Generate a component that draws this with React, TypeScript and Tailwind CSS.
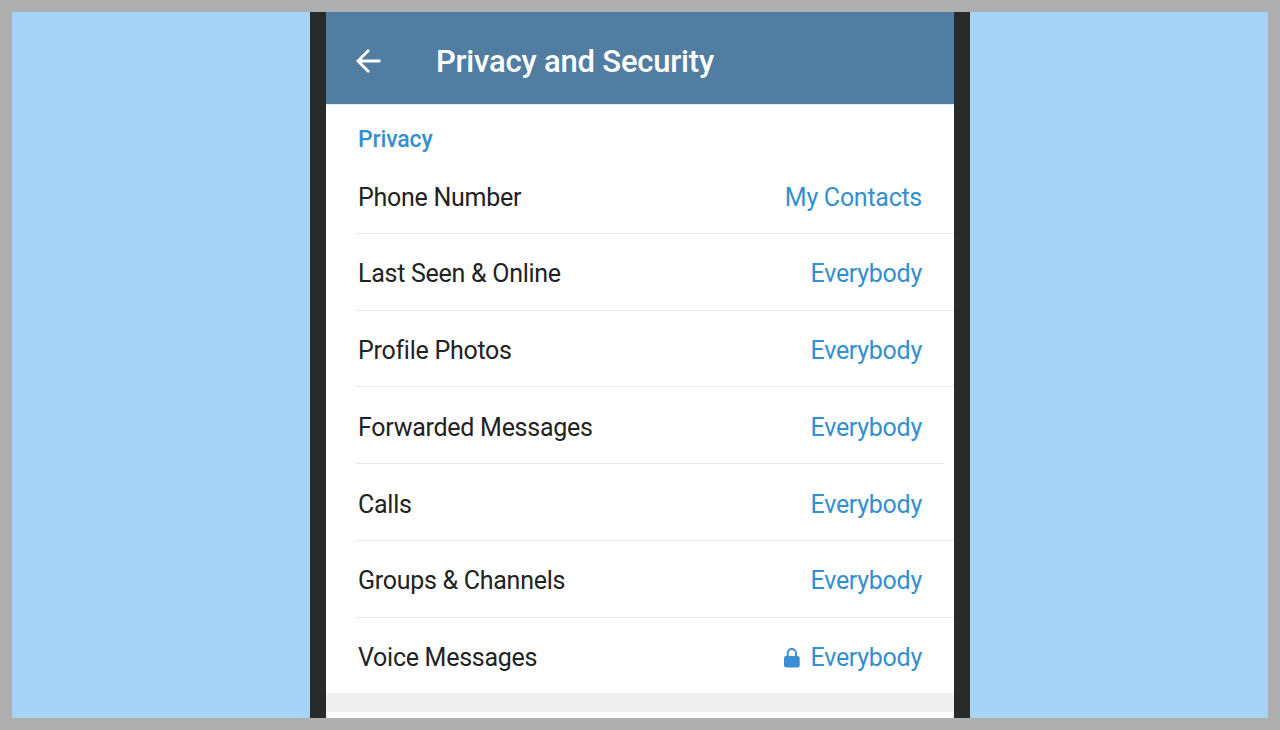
type PrivacyRow = { label: string; value: string; locked?: boolean; line: string };

const rows: PrivacyRow[] = [
  { label: 'Phone Number', value: 'My Contacts', line: 'w-full' },
  { label: 'Last Seen & Online', value: 'Everybody', line: 'w-full' },
  { label: 'Profile Photos', value: 'Everybody', line: 'w-full' },
  { label: 'Forwarded Messages', value: 'Everybody', line: 'w-[588px]' },
  { label: 'Calls', value: 'Everybody', line: 'w-full' },
  { label: 'Groups & Channels', value: 'Everybody', line: 'w-full' },
  { label: 'Voice Messages', value: 'Everybody', locked: true, line: 'w-0' },
];

function BackIcon() {
  return (
    <svg width="26" height="26" viewBox="0 0 26 26" fill="none" stroke="#fff" strokeWidth="2.8" strokeLinecap="round">
      <path d="M23.3 13H2.5M12.2 2.8L2 13l10.2 10.2" />
    </svg>
  );
}

function LockIcon() {
  return (
    <svg width="16" height="20" viewBox="0 0 16 20" className="mr-[11px]">
      <path d="M3.7 9V5.2a4.15 4.15 0 0 1 8.3 0V9" fill="none" stroke="#3a8fd3" strokeWidth="1.9" />
      <rect x="0" y="8" width="15.7" height="11.5" rx="2.2" fill="#3a8fd3" />
    </svg>
  );
}

export default function App() {
  return (
    <div className="h-[730px] w-[1280px] overflow-hidden bg-[#afafaf] p-3 font-['Roboto',sans-serif]">
      <div className="flex h-[706px] w-[1256px] justify-center overflow-hidden bg-[#a6d4f6]">
        <div className="flex h-full w-[660px] flex-col border-x-[16px] border-[#292b2a] bg-white">
          <header className="flex h-[92px] shrink-0 items-center bg-[#527da3] pl-[30px] pt-[6px] text-white">
            <BackIcon />
            <h1 className="ml-[54px] pt-[2px] text-[31px] font-medium tracking-[-0.2px]">Privacy and Security</h1>
          </header>
          <h2 className="h-[53px] shrink-0 border-t border-[#e4ebef] pl-8 pt-[18px] text-[23px] font-medium tracking-[-0.15px] text-[#3390d0]">Privacy</h2>
          {rows.map(({ label, value, locked, line }) => (
            <div key={label} className="ml-[30px] flex h-[76.75px] shrink-0 flex-col">
              <div className="flex grow items-center pl-0.5 pr-8 pt-[5px] text-[25px] tracking-[-0.27px]">
                <span className="grow text-[#222]">{label}</span>
                {locked && <LockIcon />}
                <span className="text-[#3390d0]">{value}</span>
              </div>
              <div className={`h-px shrink-0 bg-[#e8e8e8] ${line}`} />
            </div>
          ))}
          <div className="-mt-px h-[19px] shrink-0 bg-[#efefef]" />
        </div>
      </div>
    </div>
  );
}
